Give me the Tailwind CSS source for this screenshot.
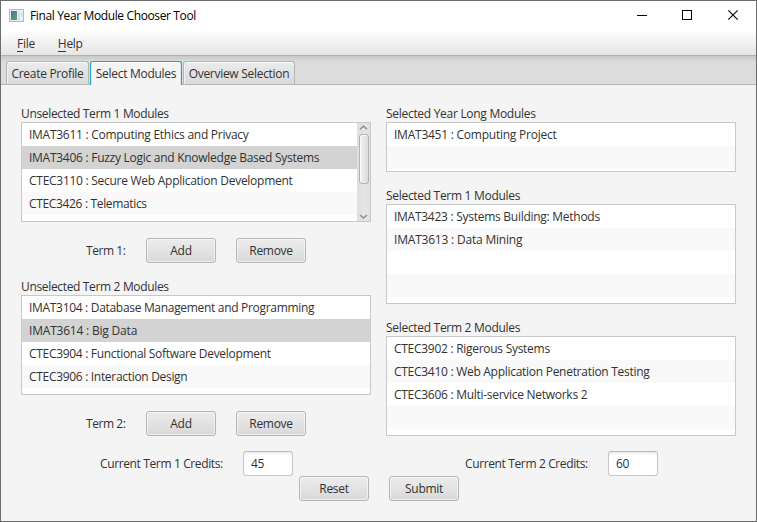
<!DOCTYPE html>
<html lang="en">
<head>
<meta charset="utf-8">
<title>Final Year Module Chooser Tool</title>
<script src="https://cdn.jsdelivr.net/npm/@tailwindcss/browser@4"></script>
</head>
<body class="h-[522px] w-[757px] overflow-hidden font-['Open_Sans','Noto_Sans',sans-serif] text-[12px] leading-4 tracking-[-0.29px] text-[#323232]">
<div class="flex h-[522px] w-[757px] flex-col border border-[#6d6d6d] bg-[#f4f4f4] whitespace-nowrap">
  <header class="flex h-[29px] shrink-0 items-center bg-white pl-2 text-black">
    <svg class="mr-[6px] h-[13px] w-[15px]" viewBox="0 0 15 13" shape-rendering="crispEdges">
      <defs><linearGradient id="g" x1="0" y1="0" x2="1" y2="1"><stop offset="0" stop-color="#3f709c"/><stop offset="1" stop-color="#5cab70"/></linearGradient></defs>
      <rect width="15" height="13" fill="#b4b8bb"/><rect x="1" y="1" width="13" height="11" fill="#e9edf0"/>
      <rect x="2" y="2" width="6" height="9" fill="url(#g)"/><rect x="9" y="2" width="2" height="9" fill="#d2e1e3"/><rect x="11" y="2" width="2" height="7" fill="#f7faf9"/><rect x="12" y="3" width="1" height="5" fill="#c1ddcf"/>
    </svg>
    <h1 class="flex-1 pt-px tracking-[-0.37px]">Final Year Module Chooser Tool</h1>
    <svg class="h-[29px] w-[138px]" viewBox="0 0 138 29" fill="none" stroke="#000">
      <path d="M19 14.5h10M64.500 9.500h9v9h-9z" shape-rendering="crispEdges"/><path d="M110.300 9.300l9.400 9.400M119.700 9.300l-9.400 9.400" stroke-width="1.100"/>
    </svg>
  </header>
  <nav class="flex h-[26px] shrink-0 items-center gap-[23px] border-b border-[#b2b2b2] bg-linear-to-b from-white to-[#e5e5e5] pt-[3px] pl-4">
    <span><span class="inline-block h-[16px] border-b border-[#323232]">F</span>ile</span>
    <span><span class="inline-block h-[16px] border-b border-[#323232]">H</span>elp</span>
  </nav>
  <div class="flex h-[29px] shrink-0 items-end gap-px border-b border-[#b5b5b5] bg-linear-to-b from-[#c8c8c8] via-[#dcdcdc] via-20% to-[#dcdcdc] pl-[5px]">
    <div class="flex h-[23px] w-[83px] items-center justify-center rounded-t-[3px] border border-b-0 border-[#b5b5b5] bg-linear-to-b from-[#ececec] to-[#d9d9d9] pt-[2px] shadow-[inset_0_1px_0_#fafafa,inset_1px_0_0_#efefef]">Create Profile</div>
    <div class="-mb-px flex h-[24px] w-[92px] items-center justify-center rounded-t-[3px] border border-b-0 border-[#1fa0ca] bg-[#f4f4f4] pt-px shadow-[inset_0_1px_0_#fff,inset_1px_0_0_#d5edf5,inset_-1px_0_0_#d5edf5]">Select Modules</div>
    <div class="flex h-[23px] w-[112px] items-center justify-center rounded-t-[3px] border border-b-0 border-[#b5b5b5] bg-linear-to-b from-[#ececec] to-[#d9d9d9] pt-[2px] shadow-[inset_0_1px_0_#fafafa,inset_1px_0_0_#efefef]">Overview Selection</div>
  </div>
  <main class="flex flex-1 flex-col">
    <div class="flex gap-[15px] pt-[21px] pl-5">
      <section class="flex w-[350px] flex-col">
        <h2 class="h-4 tracking-[-0.34px]">Unselected Term 1 Modules</h2>
        <div class="flex h-[100px] border border-[#c8c8c8] bg-white leading-[23px] tracking-[-0.27px]">
          <ul class="flex-1 *:h-[23px] *:pl-[7px]">
            <li>IMAT3611 : Computing Ethics and Privacy</li>
            <li class="bg-[#d3d3d3]">IMAT3406 : Fuzzy Logic and Knowledge Based Systems</li>
            <li>CTEC3110 : Secure Web Application Development</li>
            <li class="bg-[#f9f9f9] tracking-[-0.34px]">CTEC3426 : Telematics</li>
          </ul>
          <div class="flex w-[13px] flex-col items-center bg-linear-to-r from-[#dedede] via-[#e5e5e5] to-[#e2e2e2]">
            <svg class="h-[11px] w-[9px] shrink-0" viewBox="0 0 9 11" fill="none" stroke="#8e8e8e" stroke-width="1.500"><path d="M1 6.200L4.500 3.200L8 6.200"/></svg>
            <div class="h-[50px] w-[10px] rounded-[3px] border border-[#b2b2b2] bg-linear-to-r from-[#f2f2f2] to-[#dcdcdc] shadow-[inset_1px_1px_0_#fbfbfb]"></div>
            <svg class="mt-auto h-[9px] w-[9px] shrink-0" viewBox="0 0 9 9" fill="none" stroke="#8e8e8e" stroke-width="1.500"><path d="M1 3L4.500 6L8 3"/></svg>
          </div>
        </div>
        <div class="mt-4 flex items-center pl-[65px]">
          <span class="w-[60px] tracking-[-0.45px]">Term 1:</span>
          <button class="mr-5 h-[25px] w-[70px] rounded-[3px] border border-[#b5b5b5] bg-linear-to-b from-[#ececec] to-[#d9d9d9] shadow-[inset_0_0_0_1px_rgb(255_255_255/0.55)]">Add</button>
          <button class="h-[25px] w-[70px] rounded-[3px] border border-[#b5b5b5] bg-linear-to-b from-[#ececec] to-[#d9d9d9] shadow-[inset_0_0_0_1px_rgb(255_255_255/0.55)]">Remove</button>
        </div>
        <h2 class="mt-4 h-4 tracking-[-0.34px]">Unselected Term 2 Modules</h2>
        <ul class="h-[100px] border border-[#c8c8c8] bg-white leading-[23px] tracking-[-0.31px] *:h-[23px] *:pl-[7px]">
          <li>IMAT3104 : Database Management and Programming</li>
          <li class="bg-[#d3d3d3] tracking-[-0.2px]">IMAT3614 : Big Data</li>
          <li>CTEC3904 : Functional Software Development</li>
          <li class="bg-[#f9f9f9]">CTEC3906 : Interaction Design</li>
        </ul>
        <div class="mt-4 flex items-center pl-[65px]">
          <span class="w-[60px] tracking-[-0.45px]">Term 2:</span>
          <button class="mr-5 h-[25px] w-[70px] rounded-[3px] border border-[#b5b5b5] bg-linear-to-b from-[#ececec] to-[#d9d9d9] shadow-[inset_0_0_0_1px_rgb(255_255_255/0.55)]">Add</button>
          <button class="h-[25px] w-[70px] rounded-[3px] border border-[#b5b5b5] bg-linear-to-b from-[#ececec] to-[#d9d9d9] shadow-[inset_0_0_0_1px_rgb(255_255_255/0.55)]">Remove</button>
        </div>
        <label class="mt-[15px] flex items-center pl-[79px]"><span class="w-[143px] tracking-[-0.37px]">Current Term 1 Credits:</span>
          <input class="h-[25px] w-[50px] rounded-[3px] border border-[#c8c8c8] border-t-[#b8b8b8] bg-white pl-[7px] shadow-[inset_0_2px_2px_#eee]" value="45"></label>
      </section>
      <section class="flex w-[350px] flex-col">
        <h2 class="h-4">Selected Year Long Modules</h2>
        <ul class="h-[50px] border border-[#c8c8c8] bg-white leading-[23px] tracking-[-0.24px] *:h-[23px] *:pl-[7px]">
          <li>IMAT3451 : Computing Project</li>
          <li class="bg-[#f9f9f9]"></li>
        </ul>
        <h2 class="mt-4 h-4 tracking-[-0.3px]">Selected Term 1 Modules</h2>
        <ul class="h-[100px] border border-[#c8c8c8] bg-white leading-[23px] tracking-[-0.27px] *:h-[23px] *:pl-[7px]">
          <li>IMAT3423 : Systems Building: Methods</li>
          <li class="bg-[#f9f9f9] tracking-[-0.2px]">IMAT3613 : Data Mining</li>
          <li></li>
          <li class="bg-[#f9f9f9]"></li>
        </ul>
        <h2 class="mt-4 h-4 tracking-[-0.3px]">Selected Term 2 Modules</h2>
        <ul class="h-[100px] border border-[#c8c8c8] bg-white leading-[23px] tracking-[-0.28px] *:h-[23px] *:pl-[7px]">
          <li>CTEC3902 : Rigerous Systems</li>
          <li class="bg-[#f9f9f9]">CTEC3410 : Web Application Penetration Testing</li>
          <li>CTEC3606 : Multi-service Networks 2</li>
          <li class="bg-[#f9f9f9]"></li>
        </ul>
        <label class="mt-[15px] flex items-center pl-[79px]"><span class="w-[143px] tracking-[-0.37px]">Current Term 2 Credits:</span>
          <input class="h-[25px] w-[50px] rounded-[3px] border border-[#c8c8c8] border-t-[#b8b8b8] bg-white pl-[7px] shadow-[inset_0_2px_2px_#eee]" value="60"></label>
      </section>
    </div>
    <div class="flex gap-5 pl-[298px]">
      <button class="h-[25px] w-[70px] rounded-[3px] border border-[#b5b5b5] bg-linear-to-b from-[#ececec] to-[#d9d9d9] shadow-[inset_0_0_0_1px_rgb(255_255_255/0.55)]">Reset</button>
      <button class="h-[25px] w-[70px] rounded-[3px] border border-[#b5b5b5] bg-linear-to-b from-[#ececec] to-[#d9d9d9] shadow-[inset_0_0_0_1px_rgb(255_255_255/0.55)]">Submit</button>
    </div>
  </main>
</div>
</body>
</html>
